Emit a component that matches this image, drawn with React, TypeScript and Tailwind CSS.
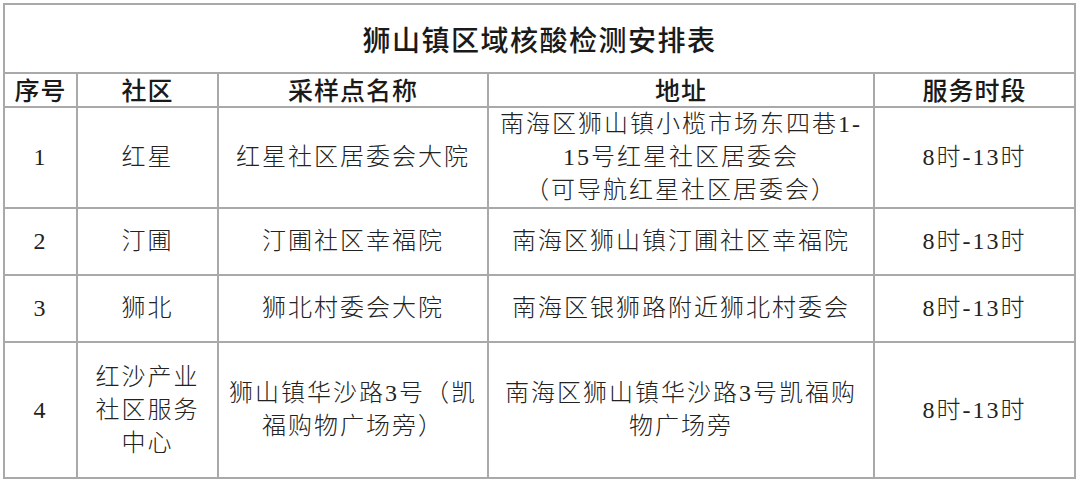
const heiti = "font-['Noto_Sans_CJK_SC',sans-serif]";
const songti = "font-['Liberation_Serif','Noto_Sans_CJK_SC',serif]";

type Row = {
  no: string;
  area: string[];
  site: string[];
  addr: string[];
  time: string;
  h: string;
};

const rows: Row[] = [
  {
    no: "1",
    area: ["红星"],
    site: ["红星社区居委会大院"],
    addr: ["南海区狮山镇小榄市场东四巷1-", "15号红星社区居委会", "（可导航红星社区居委会）"],
    time: "8时-13时",
    h: "h-[99px]",
  },
  {
    no: "2",
    area: ["汀圃"],
    site: ["汀圃社区幸福院"],
    addr: ["南海区狮山镇汀圃社区幸福院"],
    time: "8时-13时",
    h: "h-[65px]",
  },
  {
    no: "3",
    area: ["狮北"],
    site: ["狮北村委会大院"],
    addr: ["南海区银狮路附近狮北村委会"],
    time: "8时-13时",
    h: "h-[65px]",
  },
  {
    no: "4",
    area: ["红沙产业", "社区服务", "中心"],
    site: ["狮山镇华沙路3号（凯", "福购物广场旁）"],
    addr: ["南海区狮山镇华沙路3号凯福购", "物广场旁"],
    time: "8时-13时",
    h: "h-[134px]",
  },
];

const Cell = ({ lines, h }: { lines: string[]; h: string }) => (
  <div
    className={`${h} bg-white flex flex-col items-center justify-center text-[24px] leading-[33px] tracking-[2px] text-[#222] font-light ${songti}`}
  >
    {lines.map((l) => (
      <span key={l} className="whitespace-nowrap">
        {l}
      </span>
    ))}
  </div>
);

const HeadCell = ({ label }: { label: string }) => (
  <div
    className={`h-[32px] bg-white flex items-center justify-center text-[25px] tracking-[1px] text-[#1a1a1a] font-medium ${heiti}`}
  >
    {label}
  </div>
);

export default function App() {
  return (
    <div className="w-[1080px] h-[482px] bg-white pt-[3px] pl-[3px]">
      <div className="w-[1073px] grid grid-cols-[71px_139px_268px_384px_199px] gap-[2px] p-[2px] bg-[#a9a9a9]">
        <div
          className={`col-span-5 h-[67px] bg-white flex items-center justify-center text-[28px] tracking-[1.5px] text-[#1a1a1a] font-medium ${heiti}`}
        >
          狮山镇区域核酸检测安排表
        </div>

        {["序号", "社区", "采样点名称", "地址", "服务时段"].map((t) => (
          <HeadCell key={t} label={t} />
        ))}

        {rows.map((r) => (
          <>
            <Cell key={r.no + "n"} lines={[r.no]} h={r.h} />
            <Cell key={r.no + "a"} lines={r.area} h={r.h} />
            <Cell key={r.no + "s"} lines={r.site} h={r.h} />
            <Cell key={r.no + "d"} lines={r.addr} h={r.h} />
            <Cell key={r.no + "t"} lines={[r.time]} h={r.h} />
          </>
        ))}
      </div>
    </div>
  );
}
